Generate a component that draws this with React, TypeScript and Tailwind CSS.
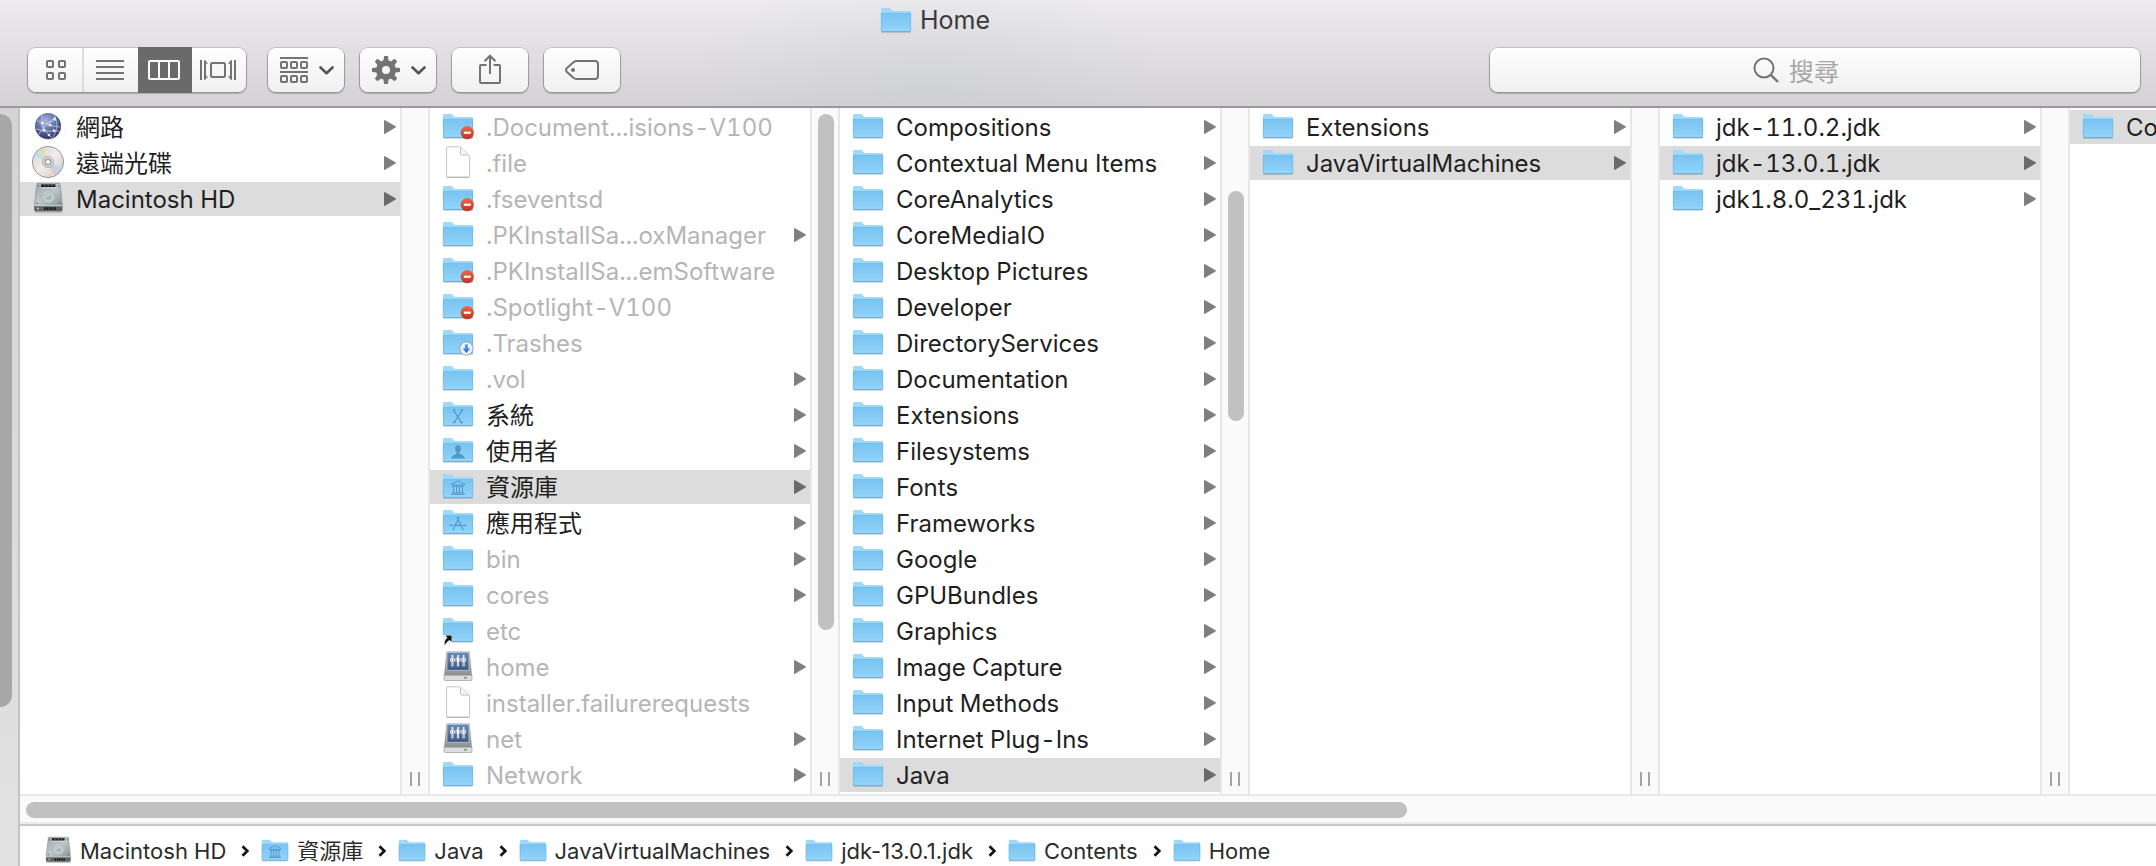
import React from "react";

type IconKind =
  | "folder"
  | "locked"
  | "dropbox"
  | "alias"
  | "system"
  | "users"
  | "library"
  | "apps"
  | "file"
  | "netdrive"
  | "globe"
  | "disc"
  | "disk";

type Item = {
  name: string;
  icon?: IconKind;
  dim?: boolean;
  arrow?: boolean;
  selected?: boolean;
};

type Column = { items: Item[]; thumb?: string };

const columns: Column[] = [
  {
    items: [
      { name: "網路", icon: "globe", arrow: true },
      { name: "遠端光碟", icon: "disc", arrow: true },
      { name: "Macintosh HD", icon: "disk", arrow: true, selected: true },
    ],
  },
  {
    thumb: "mt-[6px] h-[516px]",
    items: [
      { name: ".Document...isions-V100", icon: "locked", dim: true },
      { name: ".file", icon: "file", dim: true },
      { name: ".fseventsd", icon: "locked", dim: true },
      { name: ".PKInstallSa...oxManager", dim: true, arrow: true },
      { name: ".PKInstallSa...emSoftware", icon: "locked", dim: true },
      { name: ".Spotlight-V100", icon: "locked", dim: true },
      { name: ".Trashes", icon: "dropbox", dim: true },
      { name: ".vol", dim: true, arrow: true },
      { name: "系統", icon: "system", arrow: true },
      { name: "使用者", icon: "users", arrow: true },
      { name: "資源庫", icon: "library", arrow: true, selected: true },
      { name: "應用程式", icon: "apps", arrow: true },
      { name: "bin", dim: true, arrow: true },
      { name: "cores", dim: true, arrow: true },
      { name: "etc", icon: "alias", dim: true },
      { name: "home", icon: "netdrive", dim: true, arrow: true },
      { name: "installer.failurerequests", icon: "file", dim: true },
      { name: "net", icon: "netdrive", dim: true, arrow: true },
      { name: "Network", dim: true, arrow: true },
    ],
  },
  {
    thumb: "mt-[83px] h-[230px]",
    items: [
      "Compositions",
      "Contextual Menu Items",
      "CoreAnalytics",
      "CoreMediaIO",
      "Desktop Pictures",
      "Developer",
      "DirectoryServices",
      "Documentation",
      "Extensions",
      "Filesystems",
      "Fonts",
      "Frameworks",
      "Google",
      "GPUBundles",
      "Graphics",
      "Image Capture",
      "Input Methods",
      "Internet Plug-Ins",
      "Java",
    ].map((name) => ({ name, arrow: true, selected: name === "Java" })),
  },
  {
    items: [
      { name: "Extensions", arrow: true },
      { name: "JavaVirtualMachines", arrow: true, selected: true },
    ],
  },
  {
    items: [
      { name: "jdk-11.0.2.jdk", arrow: true },
      { name: "jdk-13.0.1.jdk", arrow: true, selected: true },
      { name: "jdk1.8.0_231.jdk", arrow: true },
    ],
  },
  { items: [{ name: "Contents", arrow: true, selected: true }] },
];

const path: Item[] = [
  { name: "Macintosh HD", icon: "disk" },
  { name: "資源庫", icon: "library" },
  { name: "Java" },
  { name: "JavaVirtualMachines" },
  { name: "jdk-13.0.1.jdk" },
  { name: "Contents" },
  { name: "Home" },
];

function Gradients() {
  return (
    <svg className="absolute size-0" aria-hidden="true">
      <defs>
        <linearGradient id="folderBody" x1="0" y1="0" x2="0" y2="1">
          <stop offset="0" stopColor="#7ac4f1" />
          <stop offset="1" stopColor="#92d3f9" />
        </linearGradient>
        <linearGradient id="redBadge" x1="0" y1="0" x2="0" y2="1">
          <stop offset="0" stopColor="#ee6a4c" />
          <stop offset="1" stopColor="#c5301a" />
        </linearGradient>
        <linearGradient id="blueArrow" x1="0" y1="0" x2="0" y2="1">
          <stop offset="0" stopColor="#56b0fa" />
          <stop offset="1" stopColor="#1765dd" />
        </linearGradient>
        <radialGradient id="globeBall" cx="0.42" cy="0.3" r="0.75">
          <stop offset="0" stopColor="#a9b5dc" />
          <stop offset="0.45" stopColor="#6676ae" />
          <stop offset="1" stopColor="#26305f" />
        </radialGradient>
        <linearGradient id="discFace" x1="0" y1="0" x2="1" y2="1">
          <stop offset="0" stopColor="#d2d2d2" />
          <stop offset="0.5" stopColor="#f1eeed" />
          <stop offset="1" stopColor="#c6c6c7" />
        </linearGradient>
        <linearGradient id="diskTop" x1="0" y1="0" x2="1" y2="1">
          <stop offset="0" stopColor="#9aa6a8" />
          <stop offset="0.5" stopColor="#bcc8ca" />
          <stop offset="1" stopColor="#8c9698" />
        </linearGradient>
        <linearGradient id="driveScreen" x1="0" y1="0" x2="0" y2="1">
          <stop offset="0" stopColor="#6c8cb8" />
          <stop offset="1" stopColor="#3b5580" />
        </linearGradient>
        <linearGradient id="driveShell" x1="0" y1="0" x2="0" y2="1">
          <stop offset="0" stopColor="#b9babb" />
          <stop offset="1" stopColor="#8d8f91" />
        </linearGradient>
      </defs>
    </svg>
  );
}

function FolderShape() {
  return (
    <>
      <path d="M1.5 27.2h29v.9h-29z" fill="#000" opacity=".15" />
      <path d="M1 4.2Q1 3 2.2 3h6.6c.9 0 1.300.3 1.900 1l.9 1.100c.4.5.9.900 1.700.900H29.800Q31 6 31 7.200V26H1Z" fill="#9fdafa" />
      <path d="M1 8.500h30V26q0 1-1 1H2q-1 0-1-1Z" fill="url(#folderBody)" />
      <path d="M1.500 8.400h29" stroke="#6fb9e6" strokeWidth=".8" />
      <path d="M1.500 24.700h29" stroke="#a8dcfa" strokeWidth=".6" />
      <path d="M1.300 26.600h29.400" stroke="#63a9d3" strokeWidth=".9" />
      <path d="M1.300 8v18M30.700 8v18" stroke="#68b2df" strokeWidth=".6" />
    </>
  );
}

function FolderMark({ kind }: { kind: IconKind }) {
  switch (kind) {
    case "locked":
      return (
        <>
          <circle cx="25.300" cy="22.200" r="6.600" fill="#000" opacity=".15" />
          <circle cx="25.300" cy="21.600" r="6.500" fill="url(#redBadge)" />
          <rect x="21.800" y="20.600" width="7" height="2.200" fill="#fff" />
        </>
      );
    case "dropbox":
      return (
        <>
          <circle cx="24.400" cy="21.500" r="6.600" fill="#eef0f2" stroke="#9aa0a6" strokeWidth=".9" />
          <path d="M22.900 17.300h3v4.200h2.300l-3.800 4.600-3.800-4.600h2.300Z" fill="url(#blueArrow)" />
        </>
      );
    case "alias":
      return (
        <>
          <path d="M1 20h9v9l-2-1.500-5 4H1Z" fill="#fff" opacity=".8" />
          <path d="M3.500 20.400H9.600V26.800L7.600 24.900C5.400 26 4 27.800 2.800 30.200 2 27.600 3 24.400 5.500 22.700Z" fill="#111" />
        </>
      );
    case "system":
      return (
        <path d="M11.500 11 19.500 23.500M20.300 11 12.200 23.500M10.800 10.900h2.600M18.700 10.900h2.600M10.500 23.600h3M18 23.600h3.200" fill="none" stroke="#4f97ca" strokeWidth="1.300" />
      );
    case "users":
      return (
        <path d="M16 10.300c2 0 3 1.400 3 3.300 0 1.500-.6 2.900-1.500 3.700v1.400c1.300.9 5 1.500 5.500 4.700H9c.5-3.200 4.200-3.800 5.500-4.700v-1.400c-.9-.8-1.500-2.200-1.500-3.700 0-1.900 1-3.300 3-3.300Z" fill="#5299c9" />
      );
    case "library":
      return (
        <path d="M9.500 13 16 10l6.500 3v1h-13ZM10.500 15.200h11M11.500 15v7M14.500 15v7M17.500 15v7M20.500 15v7M9.800 21.900h12.400M9 23.400h14" fill="none" stroke="#4f97ca" strokeWidth="1" />
      );
    case "apps":
      return (
        <path d="M17 10.300 11 22.700M15 10.300 21 22.700M8 18.400h2.800M13.500 18.400h6M21.500 18.400h2.500" fill="none" stroke="#4f97ca" strokeWidth="1.200" strokeLinecap="round" />
      );
    default:
      return null;
  }
}

function ItemArt({ kind }: { kind: IconKind }) {
  switch (kind) {
    case "file":
      return (
        <>
          <path d="M4.600.4Q4.600-.2 5.200-.2H17.500C19 0 27.600 8 27.600 10V29.500q0 .6-.6.600H5.200q-.6 0-.6-.6Z" fill="#fff" stroke="#bdbdbd" strokeWidth=".9" />
          <path d="M4.600 30.400h23" stroke="#999" strokeWidth=".6" />
          <path d="M18.500.4V6.500q0 1.500 1.500 1.500h6.700" fill="#f5f5f5" stroke="#b9b9b9" strokeWidth=".9" />
        </>
      );
    case "netdrive":
      return (
        <>
          <path d="M5.300.3H26.700Q27.600.3 27.800 1.300L30 25H2L4.200 1.300Q4.400.3 5.300.3Z" fill="url(#driveShell)" />
          <rect x="5" y="1.300" width="22" height="18" rx=".8" fill="url(#driveScreen)" stroke="#dfe3e6" strokeWidth=".6" />
          <path d="M2 24.200h28v4q0 1.300-1.300 1.300H3.300Q2 29.500 2 28.200Z" fill="#dcdedf" stroke="#8b8d8f" strokeWidth=".6" />
          <rect x="22" y="26" width="3.200" height="1.500" fill="#5fa05a" />
          {[10.4, 16, 21.6].map((x) => (
            <g key={x} transform={`translate(${x} 0)`} stroke="#fff" fill="none">
              <circle cx="0" cy="4.900" r="1" fill="#fff" stroke="none" />
              <path d="M0 6.500v4.500" strokeWidth="2" />
              <path d="M-2 10.500V7.500l1.200-.8M2 10.500V7.500L.8 6.700M-.6 10.500v5M.6 10.500v5" strokeWidth=".8" />
            </g>
          ))}
        </>
      );
    case "globe":
      return (
        <>
          <circle cx="16" cy="16" r="13" fill="#000" opacity=".15" />
          <circle cx="16" cy="15" r="13" fill="url(#globeBall)" />
          <path d="M5 9.500C10 12 18 15 28 16M10 4.500C9 12 12 20 20 27M24 6C18 10 10 17 7 23.500M22 4.500C26 11 26 18 21 26M4 18C12 20 20 21 27 20M15 12.500 24 9M9 12l3 8" fill="none" stroke="#d5dcf2" strokeWidth=".8" opacity=".85" />
          {[
            [10.5, 12],
            [18, 14],
            [22, 19.5],
            [12, 19.5],
            [22.5, 8],
            [17, 24],
          ].map(([x, y]) => (
            <circle key={`${x}-${y}`} cx={x} cy={y} r="1.300" fill="#fff" opacity=".9" />
          ))}
        </>
      );
    case "disc":
      return (
        <>
          <circle cx="16" cy="15" r="15.600" fill="url(#discFace)" stroke="#8f8f8f" strokeWidth=".9" />
          <path d="M16 15 4.500 5.500A15 15 0 0 1 10 1.300Z" fill="#cfe3b0" opacity=".7" />
          <path d="M16 15 2.500 9A15 15 0 0 1 5 5Z" fill="#b9d9ec" opacity=".8" />
          <path d="M16 15 9 1.700A15 15 0 0 1 12 .6Z" fill="#f3cfae" opacity=".7" />
          <path d="M16 15 27.500 24.500A15 15 0 0 1 22 28.700Z" fill="#cdbfe6" opacity=".75" />
          <path d="M16 15 29.500 21A15 15 0 0 1 27 25Z" fill="#aed8ea" opacity=".8" />
          <path d="M16 15 23 28.300A15 15 0 0 1 20 29.400Z" fill="#f6d3a6" opacity=".8" />
          <circle cx="16" cy="15" r="5.600" fill="#d9d9d9" stroke="#a8a8a8" strokeWidth=".8" />
          <circle cx="16" cy="15" r="3.200" fill="#c4c4c4" stroke="#8e8e8e" strokeWidth=".8" />
          <circle cx="16" cy="15" r="1.700" fill="#fff" />
        </>
      );
    case "disk":
      return (
        <>
          <path d="M3 29h27" stroke="#000" strokeWidth="1" opacity=".3" />
          <path d="M5 .3H28L30.300 22.500H2.300Z" fill="url(#diskTop)" stroke="#7d8789" strokeWidth=".6" />
          <path d="M2.200 22.500H30.500V27q0 1.300-1.300 1.300H3.500Q2.200 28.300 2.200 27Z" fill="#5c6365" />
          <path d="M2.300 22.700H30.400" stroke="#d5dcdd" strokeWidth="1" />
          <rect x="9" y="1.400" width="14.500" height="2.600" fill="#1e1e1e" />
          <path d="M9 5h14.500" stroke="#e6eaea" strokeWidth=".7" />
          <path d="M12 2.700h1.500M15.500 2.700H17M19 2.700h1.500" stroke="#888" strokeWidth=".8" />
          <circle cx="16.300" cy="13.500" r="7" fill="#bcc7c9" stroke="#a3aeb0" strokeWidth=".7" />
          <path d="M12.500 14.500a4 3.200 0 1 0 8 0l-2-3Z" fill="#a9b5b7" stroke="#dde4e4" strokeWidth=".6" />
          <circle cx="6.300" cy="3" r=".8" fill="#5d6668" />
          <circle cx="26.500" cy="3" r=".8" fill="#5d6668" />
          <circle cx="5" cy="20.300" r=".8" fill="#5d6668" />
          <circle cx="27.800" cy="20.300" r=".8" fill="#5d6668" />
          <path d="M13 24.200v2.800M15.500 24.200v2.800M18 24.200v2.800M20.500 24.200v2.800M23 24.200v2.800" stroke="#111" strokeWidth="1.500" />
          <circle cx="6" cy="25.500" r=".9" fill="#cfd6d7" />
        </>
      );
    default:
      return (
        <>
          <FolderShape />
          <FolderMark kind={kind} />
        </>
      );
  }
}

function ItemIcon({ kind = "folder", className }: { kind?: IconKind; className: string }) {
  return (
    <svg viewBox="0 0 32 32" className={`shrink-0 overflow-visible ${className}`} aria-hidden="true">
      <ItemArt kind={kind} />
    </svg>
  );
}

function Row({ item }: { item: Item }) {
  return (
    <li>
      <button
        type="button"
        className={`flex h-[34px] w-full items-center pr-1 pl-3 text-left whitespace-nowrap ${
          item.selected ? "bg-[#dcdcdc]" : ""
        }`}
      >
        <ItemIcon kind={item.icon} className="size-8" />
        <span className={`ml-3 pt-[2px] text-[24px] leading-8 ${item.dim ? "text-[#b5b5b5]" : "text-[#1f1f1f]"}`}>
          {item.name}
        </span>
        {item.arrow && (
          <svg
            viewBox="0 0 12 14"
            className={`ml-auto h-[14px] w-3 shrink-0 ${item.selected ? "text-[#6a6a6a]" : "text-[#7f7f7f]"}`}
            aria-hidden="true"
          >
            <path d="M0 .8Q0-.3 1 .2L11.500 6.300q.8.700 0 1.300L1 13.800q-1 .4-1-.6Z" fill="currentColor" />
          </svg>
        )}
      </button>
    </li>
  );
}

function BrowserColumn({ column, last }: { column: Column; last: boolean }) {
  return (
    <>
      <ul className="flex w-[380px] shrink-0 flex-col gap-[2px] bg-white py-[2px]">
        {column.items.map((item) => (
          <Row key={item.name} item={item} />
        ))}
      </ul>
      {!last && (
        <div className="flex w-[30px] shrink-0 flex-col items-center border-x-2 border-[#e7e7e7] bg-[#fafafa] pb-2">
          {column.thumb && <div className={`ml-[2px] w-4 rounded-full bg-[#c1c1c1] ${column.thumb}`} />}
          <div className="mt-auto flex gap-[6px]">
            <span className="h-[14px] w-[2px] bg-[#a3a3a3]" />
            <span className="h-[14px] w-[2px] bg-[#a3a3a3]" />
          </div>
        </div>
      )}
    </>
  );
}

const buttonFace =
  "bg-linear-to-b from-[#fefefe] to-[#f0f0f0] shadow-[0_0_0_1px_rgba(0,0,0,0.12),0_1px_1px_1px_rgba(0,0,0,0.2)]";

function ToolButton({ label, children }: { label: string; children: React.ReactNode }) {
  return (
    <button
      type="button"
      aria-label={label}
      className={`flex h-11 w-[76px] items-center justify-center rounded-[8px] text-[#737373] ${buttonFace}`}
    >
      {children}
    </button>
  );
}

function Chevron() {
  return (
    <svg viewBox="0 0 15 9" className="ml-[11px] h-[9px] w-[15px]" aria-hidden="true">
      <path d="M1.500 1.500 7.500 7.300 13.500 1.500" fill="none" stroke="#555" strokeWidth="2.600" strokeLinecap="round" strokeLinejoin="round" />
    </svg>
  );
}

function Toolbar() {
  return (
    <div className="flex h-11 items-center">
      <div className={`flex h-11 rounded-[8px] text-[#737373] ${buttonFace}`}>
        <button type="button" aria-label="Icons" className="flex w-14 items-center justify-center border-r-2 border-[#dcdcdc] pl-[2px]">
          <svg viewBox="0 0 20 20" className="size-5" fill="none" stroke="currentColor" strokeWidth="2">
            <rect x="1" y="1" width="6" height="6" rx="1" />
            <rect x="13" y="1" width="6" height="6" rx="1" />
            <rect x="1" y="13" width="6" height="6" rx="1" />
            <rect x="13" y="13" width="6" height="6" rx="1" />
          </svg>
        </button>
        <button type="button" aria-label="List" className="flex w-[54px] items-center justify-center pr-[2px]">
          <svg viewBox="0 0 28 20" className="h-5 w-7" stroke="currentColor" strokeWidth="2">
            <path d="M0 1h28M0 7h28M0 13h28M0 19h28" />
          </svg>
        </button>
        <button type="button" aria-label="Columns" aria-pressed="true" className="-my-px flex w-[54px] items-center justify-center bg-[#6a6a6a] pr-[2px] text-white">
          <svg viewBox="0 0 32 20" className="h-5 w-8" fill="none" stroke="currentColor" strokeWidth="2">
            <rect x="1" y="1" width="30" height="18" rx="1" />
            <path d="M11 1v18M21 1v18" />
          </svg>
        </button>
        <button type="button" aria-label="Cover Flow" className="flex w-[54px] items-center justify-center pr-[2px]">
          <svg viewBox="0 0 36 20" className="h-5 w-9" fill="none" stroke="currentColor" strokeWidth="2">
            <path d="M1 0v20M35 0v20" />
            <rect x="11" y="3" width="14" height="14" rx="1.500" />
            <path d="M4 0 5.500.6 8 3.800H6V16.200H8L5.500 19.400 4 20ZM32 0 30.500.6 28 3.800h2V16.200H28l2.500 3.200L32 20Z" fill="currentColor" stroke="none" />
          </svg>
        </button>
      </div>

      <div className="ml-[22px] flex gap-4">
        <ToolButton label="Arrange">
          <svg viewBox="0 0 28 26" className="ml-[2px] h-[26px] w-7" fill="none" stroke="currentColor" strokeWidth="2">
            <path d="M0 1h28M0 15h28" />
            {[1, 11, 21].map((x) => (
              <g key={x}>
                <rect x={x} y="5" width="6" height="6" rx="1" />
                <rect x={x} y="19" width="6" height="6" rx="1" />
              </g>
            ))}
          </svg>
          <Chevron />
        </ToolButton>
        <ToolButton label="Action">
          <svg viewBox="0 0 28 28" className="ml-[2px] size-7">
            <circle cx="14" cy="14" r="7" fill="none" stroke="currentColor" strokeWidth="6" />
            {[0, 45, 90, 135, 180, 225, 270, 315].map((a) => (
              <path key={a} d="M11.400 5 12 .4q.1-.4.5-.4h3q.4 0 .5.400L16.600 5Z" fill="currentColor" transform={`rotate(${a} 14 14)`} />
            ))}
          </svg>
          <Chevron />
        </ToolButton>
        <ToolButton label="Share">
          <svg viewBox="0 0 22 30" className="mb-[2px] h-[30px] w-[22px]" fill="none" stroke="currentColor" strokeWidth="2">
            <path d="M7.500 11H2q-1 0-1 1V28q0 1 1 1H20q1 0 1-1V12q0-1-1-1H14.500M11 20V2M5.600 7.300 11 1.700 16.400 7.300" />
          </svg>
        </ToolButton>
        <ToolButton label="Tags">
          <svg viewBox="0 0 34 20" className="h-5 w-[34px]" fill="none" stroke="currentColor" strokeWidth="2">
            <path d="M11.500 1H30q3 0 3 3V16q0 3-3 3H11.500Q9.800 19 8.700 17.900L2 12Q0 10 2 8L8.700 2.100Q9.800 1 11.500 1Z" />
            <circle cx="8" cy="10" r="2" fill="currentColor" stroke="none" />
          </svg>
        </ToolButton>
      </div>

      <label className={`ml-auto flex h-11 w-[650px] items-center justify-center rounded-[8px] pr-[38px] ${buttonFace}`}>
        <svg viewBox="0 0 26 26" className="mr-[10px] size-[26px]" fill="none" stroke="#737373" strokeWidth="2">
          <circle cx="11" cy="11" r="9.500" />
          <path d="M17.800 17.800 25 25" strokeWidth="2.400" />
        </svg>
        <input
          type="search"
          aria-label="搜尋"
          placeholder="搜尋"
          className="field-sizing-content bg-transparent text-[25px] leading-8 outline-none placeholder:text-[#a6a6a6]"
        />
      </label>
    </div>
  );
}

export default function App() {
  return (
    <div className="flex min-h-screen flex-col overflow-hidden bg-white font-['Inter','Noto_Sans_CJK_TC',sans-serif]">
      <Gradients />
      <header className="h-[108px] border-b-2 border-[#9a989a] bg-[radial-gradient(ellipse_240px_120px_at_43%_80%,rgba(190,200,208,0.28),transparent),linear-gradient(to_bottom,#edebee,#d4d2d5)] pr-4 pl-7">
        <div className="flex h-10 items-center justify-center pt-[2px] pr-[298px]">
          <ItemIcon className="size-8" />
          <h1 className="ml-2 text-[25px] text-[#3b393b]">Home</h1>
        </div>
        <div className="mt-2">
          <Toolbar />
        </div>
      </header>

      <div className="flex flex-1">
        <aside className="w-5 shrink-0 border-r-2 border-[#c3c3c3] bg-linear-to-b from-[#d4d4d4] to-[#e2e2e2] pt-[6px]">
          <div className="h-[593px] w-3 rounded-r-full bg-[#a7a7a7]" />
        </aside>
        <div className="flex min-w-0 flex-1 flex-col">
          <main className="flex overflow-hidden tabular-nums">
            {columns.map((column, i) => (
              <BrowserColumn key={i} column={column} last={i === columns.length - 1} />
            ))}
          </main>
          <div className="border-y-2 border-t-[#e8e8e8] border-b-[#ebebeb] bg-[#fafafa] px-[6px] pt-[6px] pb-1">
            <div className="h-4 w-[65%] rounded-full bg-[#c1c1c1]" />
          </div>
          <nav aria-label="Path" className="border-t-2 border-[#c9c9c9] bg-white pt-[11px] pl-6">
            <ol className="flex items-center">
              {path.map((item, i) => (
                <li key={item.name} className="flex items-center">
                  {i > 0 && (
                    <svg viewBox="0 0 8 12" className="mr-3 ml-[15px] h-3 w-2" aria-hidden="true">
                      <path d="M1.500 1.300 6.300 6 1.500 10.700" fill="none" stroke="#111" strokeWidth="2.600" />
                    </svg>
                  )}
                  <a href="#" className="flex h-7 items-center text-[22px] leading-7 whitespace-nowrap text-[#2b2b2b]">
                    <ItemIcon kind={item.icon} className="size-7" />
                    <span className="ml-2">{item.name}</span>
                  </a>
                </li>
              ))}
            </ol>
          </nav>
        </div>
      </div>
    </div>
  );
}
